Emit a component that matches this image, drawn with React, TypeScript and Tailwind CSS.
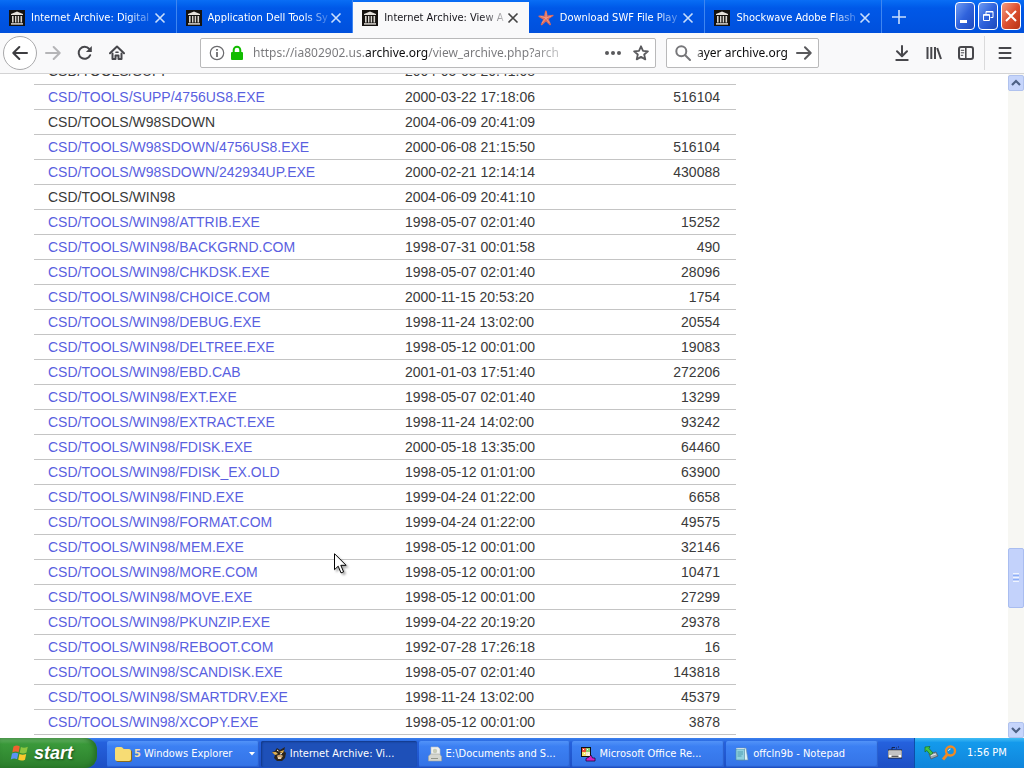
import type { ReactNode } from "react";
import { FaFolder } from "react-icons/fa6";

const tabs = [
  { id: 1, title: "Internet Archive: Digital", icon: "archive", active: false },
  { id: 2, title: "Application Dell Tools Sy", icon: "archive", active: false },
  { id: 3, title: "Internet Archive: View A", icon: "archive", active: true },
  { id: 4, title: "Download SWF File Play", icon: "star", active: false },
  { id: 5, title: "Shockwave Adobe Flash", icon: "archive", active: false },
];

const files = [
  { name: "CSD/TOOLS/SUPP", date: "2004-05-05 20:41:08", size: "" },
  { name: "CSD/TOOLS/SUPP/4756US8.EXE", date: "2000-03-22 17:18:06", size: "516104" },
  { name: "CSD/TOOLS/W98SDOWN", date: "2004-06-09 20:41:09", size: "" },
  { name: "CSD/TOOLS/W98SDOWN/4756US8.EXE", date: "2000-06-08 21:15:50", size: "516104" },
  { name: "CSD/TOOLS/W98SDOWN/242934UP.EXE", date: "2000-02-21 12:14:14", size: "430088" },
  { name: "CSD/TOOLS/WIN98", date: "2004-06-09 20:41:10", size: "" },
  { name: "CSD/TOOLS/WIN98/ATTRIB.EXE", date: "1998-05-07 02:01:40", size: "15252" },
  { name: "CSD/TOOLS/WIN98/BACKGRND.COM", date: "1998-07-31 00:01:58", size: "490" },
  { name: "CSD/TOOLS/WIN98/CHKDSK.EXE", date: "1998-05-07 02:01:40", size: "28096" },
  { name: "CSD/TOOLS/WIN98/CHOICE.COM", date: "2000-11-15 20:53:20", size: "1754" },
  { name: "CSD/TOOLS/WIN98/DEBUG.EXE", date: "1998-11-24 13:02:00", size: "20554" },
  { name: "CSD/TOOLS/WIN98/DELTREE.EXE", date: "1998-05-12 00:01:00", size: "19083" },
  { name: "CSD/TOOLS/WIN98/EBD.CAB", date: "2001-01-03 17:51:40", size: "272206" },
  { name: "CSD/TOOLS/WIN98/EXT.EXE", date: "1998-05-07 02:01:40", size: "13299" },
  { name: "CSD/TOOLS/WIN98/EXTRACT.EXE", date: "1998-11-24 14:02:00", size: "93242" },
  { name: "CSD/TOOLS/WIN98/FDISK.EXE", date: "2000-05-18 13:35:00", size: "64460" },
  { name: "CSD/TOOLS/WIN98/FDISK_EX.OLD", date: "1998-05-12 01:01:00", size: "63900" },
  { name: "CSD/TOOLS/WIN98/FIND.EXE", date: "1999-04-24 01:22:00", size: "6658" },
  { name: "CSD/TOOLS/WIN98/FORMAT.COM", date: "1999-04-24 01:22:00", size: "49575" },
  { name: "CSD/TOOLS/WIN98/MEM.EXE", date: "1998-05-12 00:01:00", size: "32146" },
  { name: "CSD/TOOLS/WIN98/MORE.COM", date: "1998-05-12 00:01:00", size: "10471" },
  { name: "CSD/TOOLS/WIN98/MOVE.EXE", date: "1998-05-12 00:01:00", size: "27299" },
  { name: "CSD/TOOLS/WIN98/PKUNZIP.EXE", date: "1999-04-22 20:19:20", size: "29378" },
  { name: "CSD/TOOLS/WIN98/REBOOT.COM", date: "1992-07-28 17:26:18", size: "16" },
  { name: "CSD/TOOLS/WIN98/SCANDISK.EXE", date: "1998-05-07 02:01:40", size: "143818" },
  { name: "CSD/TOOLS/WIN98/SMARTDRV.EXE", date: "1998-11-24 13:02:00", size: "45379" },
  { name: "CSD/TOOLS/WIN98/XCOPY.EXE", date: "1998-05-12 00:01:00", size: "3878" },
];

function ArchiveIcon() {
  return (
    <svg viewBox="0 0 16 16" className="size-4 shrink-0">
      <rect width="16" height="16" fill="#15120f" />
      <path d="M8 1.4 14 4v1H2V4z" fill="#e6e2dc" />
      <path d="M3 6h1.6v6.5H3zM6 6h1.4v6.5H6zM8.7 6h1.4v6.5H8.7zM11.5 6h1.6v6.5h-1.6z" fill="#d8d4ce" />
      <path d="M2 13.2h12v1.4H2z" fill="#e6e2dc" />
    </svg>
  );
}

function StarfishIcon() {
  return (
    <svg viewBox="0 0 16 16" className="size-4 shrink-0">
      <path d="M7.2.6 8.7.8 9.6 5.6l5.6-.9.4 1.1-4.9 3.2 2.4 5.500-1.100 1L8 11.600l-4.200 3.800-1.100-.8L5.100 9.400.4 6.800l.4-1.200 5.300.2z" fill="#dd6a5c" />
      <path d="M8 2.5 8.1 8 13 6.2M8 8l3.3 5M8 8l-4 5M8 8 2.5 6.3" stroke="#f3a48d" strokeWidth=".8" fill="none" />
    </svg>
  );
}

function CrossIcon() {
  return (
    <svg viewBox="0 0 12 12" className="size-3" fill="none" stroke="currentColor" strokeWidth="1.6">
      <path d="M1.5 1.5l9 9M10.5 1.5l-9 9" />
    </svg>
  );
}

function TabStrip() {
  return (
    <div className="flex h-[33px] shrink-0 bg-linear-to-b from-[#0a6ef5] via-[#0058e8] via-25% to-[#0050dc]">
      <div role="tablist" className="flex min-w-0 flex-1">
        {tabs.map((tab) => (
          <div
            key={tab.id}
            className={
              tab.active
                ? "mt-0.5 flex min-w-0 flex-1 items-center bg-[#f9f9fa] pl-[9px] pr-2 text-[#15141a]"
                : "flex min-w-0 flex-1 items-center border-r border-[#3f86f0] pl-[9px] pr-2 pt-0.5 text-white"
            }
          >
            {tab.icon === "archive" ? <ArchiveIcon /> : <StarfishIcon />}
            <button
              role="tab"
              aria-selected={tab.active}
              className="ml-1.5 min-w-0 flex-1 overflow-hidden whitespace-nowrap text-left text-[11px] leading-4 [mask-image:linear-gradient(to_right,#000_80%,#0003)]"
            >
              {tab.title}
            </button>
            <button aria-label="Close tab" className={tab.active ? "p-0.5 text-[#444]" : "p-0.5 text-[#c9defc]"}>
              <CrossIcon />
            </button>
          </div>
        ))}
      </div>
      <div className="flex w-[142px] shrink-0 items-start justify-between pr-[3px]">
        <button aria-label="New tab" className="mt-2 ml-2 p-0.5 text-[#c9defc]">
          <svg viewBox="0 0 14 14" className="size-3.5" stroke="currentColor" strokeWidth="1.6">
            <path d="M7 0v14M0 7h14" />
          </svg>
        </button>
        <div className="flex gap-[3px] pt-0.5">
          <button aria-label="Minimize" className="h-7 w-5 rounded border border-white bg-linear-to-br from-[#6f9bf2] via-[#2f62dc] to-[#1c49bd]">
            <svg viewBox="0 0 18 26" className="h-full w-full">
              <path d="M4 17h7v3H4z" fill="#fff" />
            </svg>
          </button>
          <button aria-label="Restore" className="h-7 w-5 rounded border border-white bg-linear-to-br from-[#6f9bf2] via-[#2f62dc] to-[#1c49bd]">
            <svg viewBox="0 0 18 26" className="h-full w-full" fill="none" stroke="#fff">
              <path d="M7 11.5V8.5h7v6h-2.5M7 9h7" />
              <path d="M4.5 11.5h6v6h-6zM4 12.3h7" />
            </svg>
          </button>
          <button aria-label="Close" className="h-7 w-5 rounded border border-white bg-linear-to-br from-[#f09a80] via-[#dd5030] to-[#b83212]">
            <svg viewBox="0 0 18 26" className="h-full w-full" stroke="#fff" strokeWidth="2">
              <path d="M4 8l10 10M14 8L4 18" />
            </svg>
          </button>
        </div>
      </div>
    </div>
  );
}

function ToolButton({ label, children }: { label: string; children: ReactNode }) {
  return (
    <button aria-label={label} className="flex size-8 shrink-0 items-center justify-center text-[#47474b]">
      <svg viewBox="0 0 16 16" className="size-4" fill="none" stroke="currentColor" strokeWidth="2" strokeLinecap="round" strokeLinejoin="round">
        {children}
      </svg>
    </button>
  );
}

function Toolbar() {
  return (
    <div className="flex h-[41px] shrink-0 items-center border-b border-[#d3d3d4] bg-[#f9f9fa]">
      <button aria-label="Back" className="ml-[3px] flex size-[34px] shrink-0 items-center justify-center rounded-full border border-[#a9a9ab] bg-white text-[#3d3d40]">
        <svg viewBox="0 0 16 16" className="size-4" fill="none" stroke="currentColor" strokeWidth="2" strokeLinecap="round" strokeLinejoin="round">
          <path d="M15 8H1.5M7.3 2 1.3 8l6 6" />
        </svg>
      </button>
      <button aria-label="Forward" disabled className="flex size-8 shrink-0 items-center justify-center text-[#b5b5b7]">
        <svg viewBox="0 0 16 16" className="size-4" fill="none" stroke="currentColor" strokeWidth="2" strokeLinecap="round" strokeLinejoin="round">
          <path d="M1 8h13.5M8.7 2l6 6-6 6" />
        </svg>
      </button>
      <ToolButton label="Reload">
        <path d="M13.2 10.2A6 6 0 1 1 12.3 4" />
        <path d="M14.8 1v6H8.9z" fill="currentColor" stroke="none" />
      </ToolButton>
      <ToolButton label="Home">
        <path d="M1 8.3 8 1.5l7 6.8" />
        <path d="M3.5 8.5V14h3v-3.5h3V14h3V8.5" />
        <path d="M7 7.2h2" strokeWidth="1.6" />
      </ToolButton>
      <div className="ml-[67px] flex h-[30px] min-w-0 flex-1 items-center rounded-xs border border-[#b9b9ba] bg-white pl-2">
        <svg viewBox="0 0 16 16" className="size-4 shrink-0" fill="none" stroke="#6b6b6e">
          <circle cx="8" cy="8" r="6.7" strokeWidth="1.2" />
          <path d="M8 7v5" strokeWidth="1.8" />
          <path d="M8 4v1.7" strokeWidth="1.8" />
        </svg>
        <svg viewBox="0 0 16 16" className="ml-1 size-4 shrink-0">
          <path d="M4.7 7.5V5a3.3 3.3 0 0 1 6.6 0v2.5" fill="none" stroke="#12bc00" strokeWidth="2" />
          <rect x="2" y="7" width="12" height="8" rx="1" fill="#12bc00" />
        </svg>
        {/* the host part of the address is darker than the rest */}
        <input
          aria-label="Address"
          readOnly
          defaultValue="https://ia802902.us.archive.org/view_archive.php?arch"
          className="ml-2 min-w-0 flex-1 bg-clip-text font-['Noto_Sans',Tahoma,sans-serif] text-[12px] text-transparent outline-none [background-image:linear-gradient(to_right,#77777a_112px,#0c0c0d_112px,#0c0c0d_175px,#77777a_175px)] [mask-image:linear-gradient(to_right,#000_280px,#0003_316px)]"
        />
        <button aria-label="Page actions" className="ml-9 flex size-4 shrink-0 items-center text-[#59595c]">
          <svg viewBox="0 0 16 16" className="size-4" fill="currentColor">
            <circle cx="2" cy="8" r="2" />
            <circle cx="8" cy="8" r="2" />
            <circle cx="14" cy="8" r="2" />
          </svg>
        </button>
        <button aria-label="Bookmark this page" className="mr-1.5 ml-3 shrink-0 text-[#59595c]">
          <svg viewBox="0 0 16 16" className="size-4" fill="none" stroke="currentColor" strokeWidth="1.8" strokeLinejoin="round">
            <path d="M8 1.3l2 4.5 4.9.5-3.7 3.2 1.1 4.9L8 11.9l-4.3 2.5 1.1-4.9L1.1 6.3 6 5.8z" />
          </svg>
        </button>
      </div>
      <div className="ml-2.5 flex h-[30px] w-[153px] shrink-0 items-center rounded-xs border border-[#b9b9ba] bg-white pr-1.5 pl-2">
        <svg viewBox="0 0 16 16" className="size-4 shrink-0" fill="none" stroke="#77777a" strokeWidth="2" strokeLinecap="round">
          <circle cx="6.3" cy="6.3" r="5" />
          <path d="M10.2 10.2 15 15" />
        </svg>
        <input
          aria-label="Search"
          defaultValue="ayer archive.org"
          className="ml-1.5 min-w-0 flex-1 bg-transparent font-['Noto_Sans',Tahoma,sans-serif] text-[12px] text-[#0c0c0d] outline-none [mask-image:linear-gradient(to_right,#0006,#000_5px)]"
        />
        <button aria-label="Go" className="shrink-0 text-[#59595c]">
          <svg viewBox="0 0 16 16" className="size-4" fill="none" stroke="currentColor" strokeWidth="2" strokeLinecap="round" strokeLinejoin="round">
            <path d="M1 8h13.5M9 2.3 14.7 8 9 13.7" />
          </svg>
        </button>
      </div>
      <div className="ml-[67px] flex shrink-0 items-center">
        <ToolButton label="Downloads">
          <path d="M8 1v9.5M3 6.2l5 5 5-5M2.3 15h11.4" />
        </ToolButton>
        <ToolButton label="Library">
          <path d="M1.5 2v12M5.3 2v12M9 2v12M11.2 3l3.8 11" strokeLinecap="butt" />
        </ToolButton>
        <ToolButton label="Sidebars">
          <rect x="1" y="2" width="14" height="12" rx="2" />
          <path d="M7.8 2v12" strokeWidth="1.6" />
          <path d="M3.2 5.3h2.6M3.2 7.8h2.6M3.2 10.3h1.6" strokeWidth="1" />
        </ToolButton>
        <div className="ml-0.5 h-[34px] border-l border-[#dadadb]" />
        <button aria-label="Open menu" className="mr-[3px] ml-1 flex size-8 items-center justify-center text-[#47474b]">
          <svg viewBox="0 0 16 16" className="size-4" stroke="currentColor" strokeWidth="2" strokeLinecap="round">
            <path d="M2.5 3h11M2.5 8h11M2.5 13h11" />
          </svg>
        </button>
      </div>
    </div>
  );
}

function FileTable() {
  return (
    <table className="-mt-[15px] ml-[34px] w-[702px] table-fixed border-collapse font-['Liberation_Sans',Arial,sans-serif] text-sm leading-6 text-[#3a3a3a]">
      <colgroup>
        <col className="w-[357px]" />
        <col className="w-[200px]" />
        <col />
      </colgroup>
      <tbody>
        {files.map((file) => (
          <tr key={file.name} className="h-[25px] border-b border-[#c4c4c4]">
            <td className="p-0 pl-3.5">
              {file.size ? (
                <a href="#" className="text-[#5a5fdf]">{file.name}</a>
              ) : (
                file.name
              )}
            </td>
            <td className="p-0 pl-3.5">{file.date}</td>
            <td className="p-0 pr-4 text-right">{file.size}</td>
          </tr>
        ))}
      </tbody>
    </table>
  );
}

function ScrollArrow({ label, d }: { label: string; d: string }) {
  return (
    <button aria-label={label} className="flex size-4 shrink-0 items-center justify-center rounded-xs border border-[#b0c2ee] bg-[#c6d5fb]">
      <svg viewBox="0 0 10 10" className="size-2.5" fill="none" stroke="#4d6185" strokeWidth="2.2">
        <path d={d} />
      </svg>
    </button>
  );
}

function Scrollbar() {
  return (
    <div className="flex w-4 shrink-0 flex-col bg-[#f7f7f3] pt-px">
      <ScrollArrow label="Scroll up" d="M1 7l4-4 4 4" />
      <div className="flex-[4_1_0%]" />
      <div className="flex h-[60px] flex-col items-center justify-center gap-px rounded-xs border border-[#a9bdf0] bg-[#c3d2fb]">
        <div className="h-px w-1.5 bg-[#eef4fe]" />
        <div className="h-px w-1.5 bg-[#8cb0f8]" />
        <div className="h-px w-1.5 bg-[#eef4fe]" />
        <div className="h-px w-1.5 bg-[#8cb0f8]" />
        <div className="h-px w-1.5 bg-[#eef4fe]" />
      </div>
      <div className="flex-1" />
      <ScrollArrow label="Scroll down" d="M1 3l4 4 4-4" />
    </div>
  );
}

function TaskButton({ active, icon, children }: { active?: boolean; icon: ReactNode; children: ReactNode }) {
  return (
    <button
      className={
        active
          ? "flex h-[26px] min-w-0 flex-1 items-center gap-[3px] rounded-xs bg-[#1e50b8] px-2.5 text-white shadow-[inset_1px_1px_2px_#123786]"
          : "flex h-[26px] min-w-0 flex-1 items-center gap-[3px] rounded-xs bg-linear-to-b from-[#5293f8] via-[#3c80f3] via-20% to-[#3473e6] px-2 text-white shadow-[inset_-1px_-1px_1px_#2a5fcc]"
      }
    >
      {icon}
      {children}
    </button>
  );
}

function Taskbar() {
  return (
    <div className="flex h-[30px] shrink-0 items-center bg-linear-to-b from-[#3b80ee] via-[#2561dd] via-15% to-[#1d4fc4] text-[11px]">
      <button className="flex h-full w-[97px] shrink-0 items-center gap-1 rounded-r-xl bg-linear-to-b from-[#6cb86c] via-[#3a993a] via-20% to-[#2c7f2c] pl-2.5 text-white shadow-[inset_-3px_0_5px_#256e25]">
        <svg viewBox="0 0 20 20" className="size-5 shrink-0">
          <path d="M3.5 3.6C6 2 8 2.4 9.8 3.4L8.6 9.2C6.6 8.2 4.7 8.1 2.3 9.4z" fill="#f0622f" />
          <path d="M10.9 4c2 .9 4.2 1.1 6.9-.3l-1.3 5.9c-2.4 1.2-4.6 1.1-6.8.1z" fill="#8cc63f" />
          <path d="M2 10.6c2.4-1.3 4.3-1.2 6.3-.2l-1.2 5.8c-2-1-4-1-6.3.2z" fill="#5b93f5" />
          <path d="M9.4 10.9c2.2 1 4.4 1.1 6.8 0L15 16.7c-2.4 1.2-4.7 1-6.8 0z" fill="#fbc92d" />
        </svg>
        <span className="font-['Liberation_Sans',Arial,sans-serif] text-lg leading-5 font-bold italic [text-shadow:1px_1px_2px_#1c4f1c]">start</span>
      </button>
      <div className="ml-2.5 flex min-w-0 flex-1 gap-0.5 pt-0.5">
        <TaskButton icon={<FaFolder className="size-4 shrink-0 text-[#f7dc74] drop-shadow-[1px_1px_0_#8a6a1c]" />}>
          <span className="font-bold text-[#f6dfae]">5</span>
          <span className="min-w-0 flex-1 truncate text-left">Windows Explorer</span>
          <svg viewBox="0 0 6 4" className="-mr-1 h-1 w-1.5 shrink-0" fill="#fff">
            <path d="M0 0h6L3 3.5z" />
          </svg>
        </TaskButton>
        <TaskButton
          active
          icon={
            <svg viewBox="0 0 16 16" className="size-4 shrink-0">
              <path d="M1 6l3-1 2-3 3 2 5-3-1 4 2 2-1 5-3 3H6L3 12l1-3z" fill="#2b241d" />
              <path d="M1 6.3 5 6l2 2-3 1zM8 6l5-2-1 3z" fill="#e2b354" />
              <path d="M6 10c2-2 5-1 6 0l-2 3H7z" fill="#c9a06a" />
              <path d="M6 4l1.5 1M9 8l2-.5M7 12h3" stroke="#fff" />
            </svg>
          }
        >
          <span className="truncate">Internet Archive: Vi...</span>
        </TaskButton>
        <TaskButton
          icon={
            <svg viewBox="0 0 16 16" className="size-4 shrink-0">
              <path d="M4 1h7l2 2v8H4z" fill="#eef0ee" stroke="#b9bfc4" strokeWidth=".6" />
              <path d="M1.5 10 4 8h8.5l2 2.5V15h-13z" fill="#d5d6cf" stroke="#a3a69e" strokeWidth=".6" />
              <circle cx="8" cy="5" r="2.2" fill="#c7cbb9" />
              <path d="M4 12.5h7" stroke="#93968c" />
            </svg>
          }
        >
          <span className="truncate">E:\Documents and S...</span>
        </TaskButton>
        <TaskButton
          icon={
            <svg viewBox="0 0 16 16" className="size-4 shrink-0">
              <path d="M1 1h10v10H1z" fill="#111" />
              <path d="M2 2h4v4H2z" fill="#e8543c" />
              <path d="M6 2h4v4H6z" fill="#8fd06c" />
              <path d="M2 6h4v4H2z" fill="#f3e46c" />
              <path d="M6 6h4v4H6z" fill="#f4ead0" />
              <path d="M3 3h1v1H3zM7 3h1v1H7zM4 7h1v1H4zM8 8h1v1H8z" fill="#fff" />
              <path d="M6 12.5 9 11l2-2 1.5 3H15v3H6z" fill="#d31fc4" stroke="#1c0d3a" strokeWidth=".8" />
            </svg>
          }
        >
          <span className="truncate">Microsoft Office Re...</span>
        </TaskButton>
        <TaskButton
          icon={
            <svg viewBox="0 0 16 16" className="size-4 shrink-0">
              <path d="M3 2h9l2 12H4.5z" fill="#dff1f7" stroke="#6d93a8" strokeWidth=".6" />
              <path d="M2 3h8.5v11H2z" fill="#8fd0e0" stroke="#4f8ca3" strokeWidth=".6" />
              <path d="M3.5 6H9M3.5 8H9M3.5 10h4" stroke="#3f8fa5" strokeWidth=".8" />
              <path d="M2.5 2.5h8" stroke="#fff" strokeDasharray="1 1" />
            </svg>
          }
        >
          <span className="truncate">offcln9b - Notepad</span>
        </TaskButton>
      </div>
      <button aria-label="Keyboard layout" className="mr-3 ml-2.5 shrink-0">
        <svg viewBox="0 0 14 14" className="size-3.5">
          <path d="M4 3.5V1.500h3M8 2h1M10 1h1" stroke="#14224d" fill="none" />
          <path d="M0 4h14v8H0z" fill="#fff" stroke="#111" strokeWidth=".8" />
          <path d="M1.5 6h11M1.5 8h11" stroke="#111" strokeDasharray="1 1" />
          <path d="M3.5 10.2h7" stroke="#111" />
        </svg>
      </button>
      <div className="flex h-full w-[110px] shrink-0 items-center border-l border-[#0c4fa8] bg-linear-to-b from-[#3fbdf4] via-[#149aec] via-15% to-[#1085db] pl-2 text-white">
        <svg viewBox="0 0 16 16" className="size-4">
          <path d="M6 9l7-2 2 4-7 3z" fill="#9aa3a8" stroke="#49525c" strokeWidth=".7" />
          <path d="M8 10.5l5-1.5" stroke="#e7edf0" />
          <path d="M2 2l5-.5L6 3.5l4 4.5-2.5 2L3.8 5.5 2 7z" fill="#42c545" stroke="#186e22" strokeWidth=".7" />
        </svg>
        <svg viewBox="0 0 16 16" className="ml-0.5 size-4" fill="none">
          <circle cx="9.5" cy="6" r="4.5" stroke="#f08a24" strokeWidth="2.4" />
          <path d="M6.2 9.5 2 14.5" stroke="#f08a24" strokeWidth="2.8" />
          <path d="M7.5 6a2 2 0 0 1 2-2" stroke="#d7ecfb" />
        </svg>
        <span className="ml-2.5">1:56 PM</span>
      </div>
    </div>
  );
}

export default function App() {
  return (
    <div className="relative flex h-screen flex-col overflow-hidden bg-white font-['DejaVu_Sans_Condensed','DejaVu_Sans',Tahoma,sans-serif]">
      <TabStrip />
      <Toolbar />
      <div className="flex min-h-0 flex-1">
        <main className="min-w-0 flex-1 overflow-hidden">
          <FileTable />
        </main>
        <Scrollbar />
      </div>
      <Taskbar />
      <svg viewBox="0 0 13 22" className="pointer-events-none absolute top-[553px] left-[334px] h-[22px] w-[13px] drop-shadow-[2px_2px_1px_#0005]">
        <path d="M.5.7v16l3.7-3.5 2.8 6.7 2.6-1.1-2.8-6.5h5.3z" fill="#fff" stroke="#000" />
      </svg>
    </div>
  );
}
